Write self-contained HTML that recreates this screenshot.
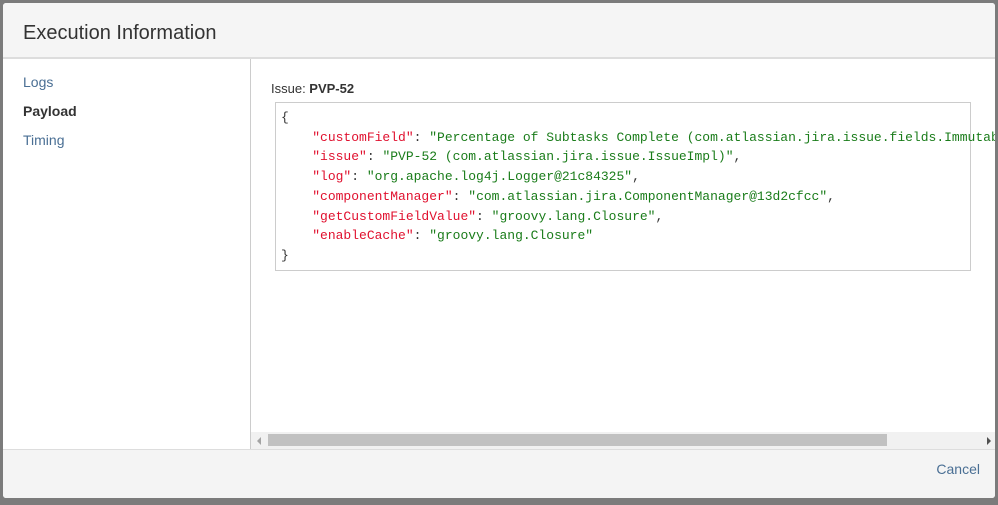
<!DOCTYPE html>
<html><head><style>
body{margin:0;width:998px;height:505px;background:#7b7b7b;overflow:hidden;font-family:"Liberation Sans",sans-serif;}
.dlg{position:absolute;left:3px;top:3px;width:992px;height:495px;background:#fff;border-radius:3px;overflow:hidden;}
.hd{position:absolute;left:0;top:0;right:0;height:54px;background:#f5f5f5;border-bottom:2px solid #ddd;}
.hd h1{margin:0;position:absolute;left:20px;top:19px;font-size:20px;font-weight:normal;color:#333;}
.nav{position:absolute;left:0;top:56px;width:247px;height:390px;border-right:1px solid #ccc;}
.nav div{position:absolute;left:20px;font-size:14px;color:#4a6f94;}
.main{position:absolute;left:248px;top:56px;right:0;height:390px;overflow:hidden;}
.iss{position:absolute;left:20px;top:22px;font-size:13px;color:#333;}
.code{position:absolute;left:24px;top:43px;width:694px;height:167px;border:1px solid #ccc;}
pre{margin:0;position:absolute;left:5px;top:5px;font-family:"Liberation Mono",monospace;font-size:13px;line-height:19.7px;color:#333;white-space:pre;}
.k{color:#e0102e}.s{color:#1a7c1a}
.sb{position:absolute;left:0;right:0;top:373px;height:17px;background:#f1f1f1;}
.th{position:absolute;left:17px;top:2px;width:619px;height:12px;background:#c1c1c1;}
.ft{position:absolute;left:0;right:0;top:446px;height:49px;background:#f4f4f4;border-top:1px solid #ddd;}
.ft span{position:absolute;right:15px;top:11px;font-size:14px;color:#4a6f94;}
</style></head><body>
<div class="dlg">
<div class="hd"><h1>Execution Information</h1></div>
<div class="nav">
<div style="top:15px">Logs</div>
<div style="top:44px;color:#333;font-weight:bold">Payload</div>
<div style="top:73px">Timing</div>
</div>
<div class="main">
<div class="iss">Issue: <b>PVP-52</b></div>
<div class="code"><pre>{
    <span class="k">"customField"</span>: <span class="s">"Percentage of Subtasks Complete (com.atlassian.jira.issue.fields.ImmutableCustomField)"</span>,
    <span class="k">"issue"</span>: <span class="s">"PVP-52 (com.atlassian.jira.issue.IssueImpl)"</span>,
    <span class="k">"log"</span>: <span class="s">"org.apache.log4j.Logger@21c84325"</span>,
    <span class="k">"componentManager"</span>: <span class="s">"com.atlassian.jira.ComponentManager@13d2cfcc"</span>,
    <span class="k">"getCustomFieldValue"</span>: <span class="s">"groovy.lang.Closure"</span>,
    <span class="k">"enableCache"</span>: <span class="s">"groovy.lang.Closure"</span>
}</pre></div>
<div class="sb"><div class="th"></div>
<div style="position:absolute;left:6px;top:5px;border-right:4px solid #a3a3a3;border-top:4px solid transparent;border-bottom:4px solid transparent"></div>
<div style="position:absolute;right:4px;top:5px;border-left:4px solid #505050;border-top:4px solid transparent;border-bottom:4px solid transparent"></div>
</div>
</div>
<div class="ft"><span>Cancel</span></div>
</div>
</body></html>
